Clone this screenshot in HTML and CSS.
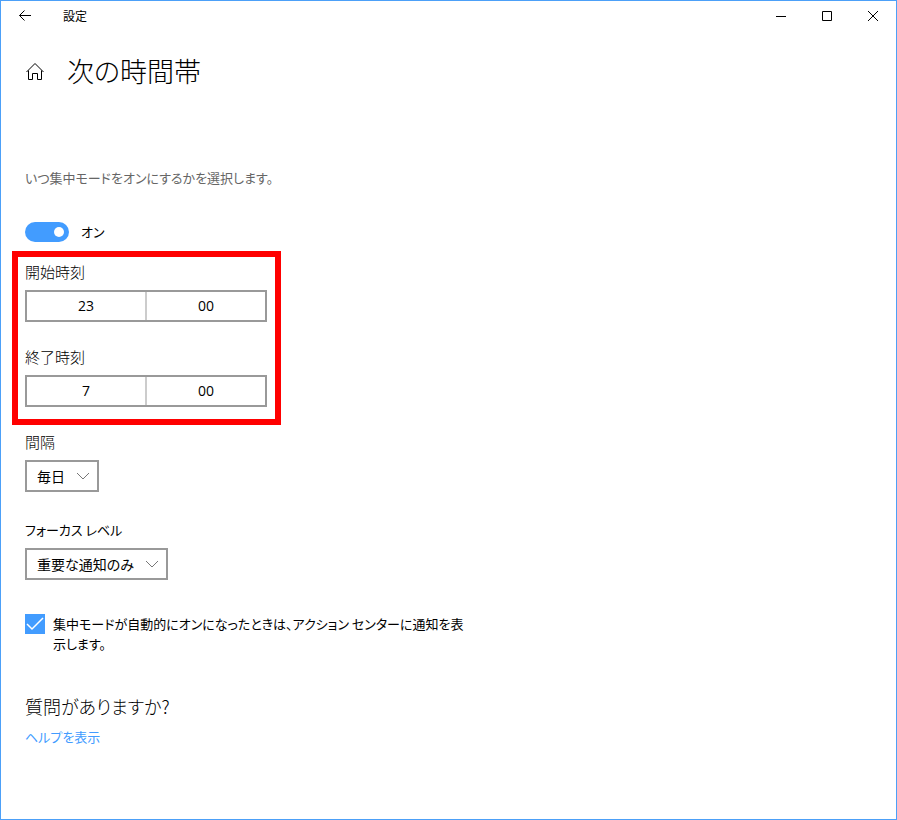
FILE: index.html
```html
<!DOCTYPE html>
<html lang="ja">
<head>
<meta charset="utf-8">
<meta name="viewport" content="width=device-width, initial-scale=1">
<title>設定</title>
<link rel="stylesheet" href="styles.css">
</head>
<body>
<div class="window">
  <header class="titlebar">
    <button class="titlebar-button back" type="button" aria-label="戻る">
      <svg width="14" height="12" viewBox="0 0 14 12"><path d="M13 5.500H1.500M6.500 .5l-5 5 5 5"/></svg>
    </button>
    <span class="titlebar-title">設定</span>
    <button class="titlebar-button" type="button" aria-label="最小化">
      <svg width="12" height="12" viewBox="0 0 12 12"><path d="M1 6.500h10"/></svg>
    </button>
    <button class="titlebar-button" type="button" aria-label="最大化">
      <svg width="12" height="12" viewBox="0 0 12 12"><path d="M1.500 1.500h9v9h-9z"/></svg>
    </button>
    <button class="titlebar-button" type="button" aria-label="閉じる">
      <svg width="12" height="12" viewBox="0 0 12 12"><path d="M1 1l10 10M11 1L1 11"/></svg>
    </button>
  </header>

  <main class="content">
    <div class="page-head">
      <a class="home" href="#" aria-label="ホーム">
        <svg width="20" height="20" viewBox="0 0 20 20"><path d="M1.500 11L10 2.500l8.500 8.500M3.500 9.500v9h4v-6h5v6h4v-9"/></svg>
      </a>
      <h1 class="page-title">次の時間帯</h1>
    </div>

    <p class="description">いつ集中モードをオンにするかを選択します。</p>

    <label class="switch">
      <input class="switch-input" type="checkbox" role="switch" checked>
      <span>オン</span>
    </label>

    <section class="times">
      <div class="field">
        <label for="start">開始時刻</label>
        <button class="time-picker" id="start" type="button"><span>23</span><span>00</span></button>
      </div>
      <div class="field">
        <label for="end">終了時刻</label>
        <button class="time-picker" id="end" type="button"><span>7</span><span>00</span></button>
      </div>
    </section>

    <div class="field">
      <label for="repeat">間隔</label>
      <div class="dropdown">
        <select id="repeat"><option>毎日</option></select>
        <svg width="14" height="8" viewBox="0 0 14 8"><path d="M1 1l6 6 6-6"/></svg>
      </div>
    </div>

    <div class="field level">
      <label for="level">フォーカス レベル</label>
      <div class="dropdown">
        <select id="level"><option>重要な通知のみ</option></select>
        <svg width="14" height="8" viewBox="0 0 14 8"><path d="M1 1l6 6 6-6"/></svg>
      </div>
    </div>

    <label class="check">
      <span class="check-box">
        <input type="checkbox" checked>
        <svg width="20" height="20" viewBox="0 0 20 20"><path d="M2 10l5 5L18 4"/></svg>
      </span>
      <span>集中モードが自動的にオンになったときは、アクション センターに通知を表示します。</span>
    </label>

    <h2 class="help-title">質問がありますか?</h2>
    <a class="help-link" href="#">ヘルプを表示</a>
  </main>
</div>
</body>
</html>
```

FILE: styles.css
```css
* {
  box-sizing: border-box;
}

body {
  margin: 0;
  background: #fff;
  color: #000;
  font-family: "Noto Sans CJK JP", sans-serif;
  font-size: 13px;
  line-height: 20px;
  font-feature-settings: "palt";
}

button,
select {
  margin: 0;
  padding: 0;
  border: 0;
  background: none;
  color: inherit;
  font: inherit;
  font-feature-settings: inherit;
}

h1,
h2,
p {
  margin: 0;
  font-weight: 300;
}

svg {
  display: block;
  fill: none;
  stroke: #000;
}

.window {
  min-height: 100vh;
  border: 1px solid #4ca0f8;
}

.titlebar {
  display: flex;
  align-items: center;
  height: 30px;
}

.titlebar-button {
  display: grid;
  place-items: center;
  width: 46px;
  height: 30px;
}

.titlebar-button.back {
  width: 48px;
}

.titlebar-title {
  flex: 1;
  padding-left: 14px;
  font-size: 12px;
}

.content {
  display: flex;
  flex-direction: column;
  align-items: flex-start;
  padding: 20px 24px;
}

.page-head {
  display: flex;
  align-items: center;
  gap: 22px;
  height: 40px;
}

.page-title {
  font-size: 27px;
  line-height: 40px;
}

.description {
  margin-top: 77px;
  color: #666;
  font-weight: 400;
}

.switch {
  display: flex;
  align-items: center;
  gap: 12px;
  margin-top: 34px;
}

.switch-input {
  display: flex;
  align-items: center;
  justify-content: flex-end;
  width: 44px;
  height: 20px;
  margin: 0;
  padding: 5px;
  border-radius: 10px;
  background: #429cff;
  appearance: none;
}

.switch-input::before {
  width: 10px;
  height: 10px;
  border-radius: 50%;
  background: #fff;
  content: "";
}

.times {
  display: flex;
  flex-direction: column;
  gap: 25px;
  margin: 9px -13px 7px;
  padding: 5px 8px 12px 7px;
  border: 6px solid #f00;
}

.field {
  display: flex;
  flex-direction: column;
  align-items: flex-start;
  gap: 8px;
  font-size: 15px;
  font-weight: 300;
}

.time-picker {
  display: grid;
  grid-template-columns: 1fr 1fr;
  gap: 2px;
  width: 242px;
  height: 32px;
  border: 2px solid #999;
  background: #ccc;
  font-family: "Open Sans", sans-serif;
  font-size: 14px;
  font-weight: 400;
  line-height: 28px;
}

.time-picker span {
  background: #fff;
}

.dropdown {
  display: grid;
  align-items: center;
}

.dropdown select {
  grid-area: 1 / 1;
  height: 32px;
  padding: 0 32px 0 10px;
  border: 2px solid #999;
  border-radius: 0;
  font-size: 14px;
  font-weight: 400;
  appearance: none;
}

.dropdown svg {
  grid-area: 1 / 1;
  justify-self: end;
  margin-right: 9px;
  stroke: #777;
  pointer-events: none;
}

.level {
  margin-top: 28px;
  font-size: 13px;
  font-weight: 400;
}

.check {
  display: flex;
  gap: 8px;
  max-width: 448px;
  margin-top: 34px;
}

.check-box {
  display: grid;
  flex: none;
  width: 20px;
  height: 20px;
}

.check-box input {
  grid-area: 1 / 1;
  margin: 0;
  background: #429cff;
  appearance: none;
}

.check-box svg {
  grid-area: 1 / 1;
  stroke: #fff;
  stroke-width: 1.5;
  pointer-events: none;
}

.help-title {
  margin: 38px 0 7px;
  font-size: 18px;
  line-height: 28px;
}

.help-link {
  color: #429cff;
  text-decoration: none;
}
```
